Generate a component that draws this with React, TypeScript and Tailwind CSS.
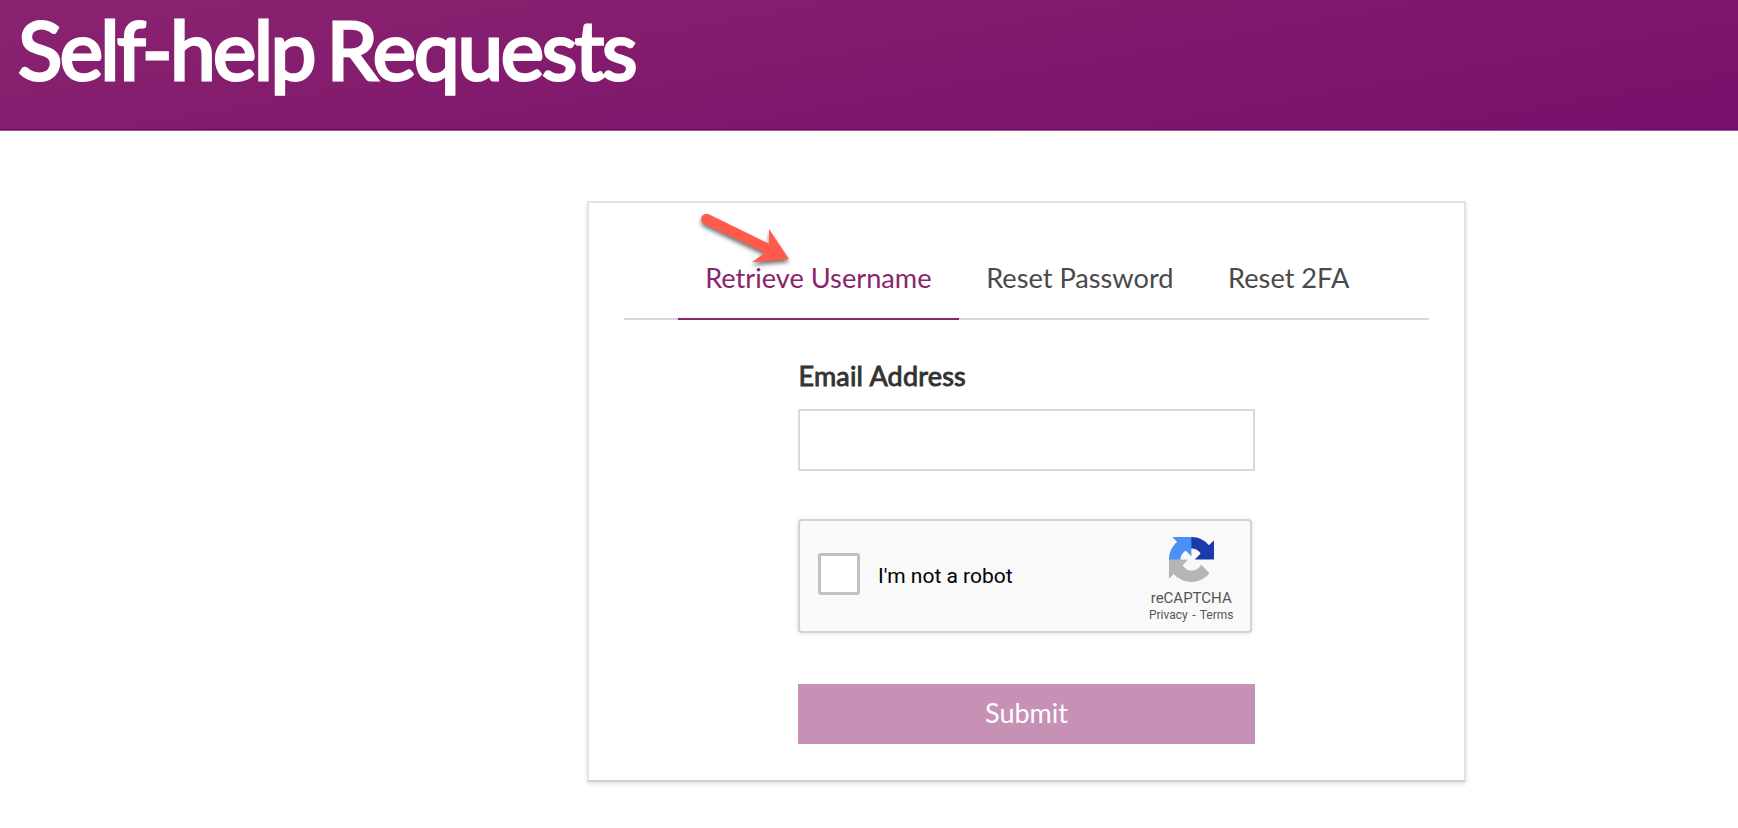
const tabs = ["Retrieve Username", "Reset Password", "Reset 2FA"];

function RecaptchaLogo() {
  return (
    <svg viewBox="0 0 64 64" className="h-[45px] w-[45px]">
      <path fill="#1c3aa9" d="M64 31.955l-.033-1.37V4.687l-7.16 7.16C50.948 4.674 42.033.093 32.05.093c-10.4 0-19.622 4.96-25.458 12.64l11.736 11.86a15.55 15.55 0 0 1 4.754-5.334c2.05-1.6 4.952-2.906 8.968-2.906.485 0 .86.057 1.135.163 4.976.393 9.288 3.14 11.828 7.124l-8.307 8.307L64 31.953" />
      <path fill="#4a90f5" d="M31.862.094l-1.37.033H4.594l7.16 7.16C4.58 13.147 0 22.06 0 32.046c0 10.4 4.96 19.622 12.64 25.458L24.5 45.768a15.55 15.55 0 0 1-5.334-4.754c-1.6-2.05-2.906-4.952-2.906-8.968 0-.485.057-.86.163-1.135.393-4.976 3.14-9.288 7.124-11.828l8.307 8.307L31.86.095" />
      <path fill="#b5b5b5" d="M.001 32.045l.033 1.37v25.898l7.16-7.16c5.86 7.173 14.774 11.754 24.76 11.754 10.4 0 19.622-4.96 25.458-12.64l-11.736-11.86a15.55 15.55 0 0 1-4.754 5.334c-2.05 1.6-4.952 2.906-8.968 2.906-.485 0-.86-.057-1.135-.163-4.976-.393-9.288-3.14-11.828-7.124l8.307-8.307c-10.522.04-22.4.066-27.295-.005" />
    </svg>
  );
}

function Arrow() {
  return (
    <svg viewBox="696 206 104 68" className="pointer-events-none absolute top-[3px] left-[107px] h-[68px] w-[104px] drop-shadow-[0px_3px_2px_rgba(0,0,0,0.55)]">
      <path fill="#ff5a4b" d="M708.7 214.3 L769 243.7 V229 L789 259.3 L752 262.2 L765 252.8 L704.2 224 A5.2 5.2 0 0 1 708.7 214.3 Z" />
    </svg>
  );
}

export default function App() {
  return (
    <div className="h-[828px] overflow-hidden bg-white font-['Lato',sans-serif]">
      <header className="flex h-[131px] border-b border-[#a55a9d] bg-[linear-gradient(170deg,#8a236f_0%,#77106b_100%)] pl-[18px] shadow-[inset_0_-1px_0_#6f0763]">
        <h1 className="text-[82px] leading-[96px] tracking-[-2.35px] whitespace-nowrap text-white [-webkit-text-stroke:3px_white] [word-spacing:-6px]">
          <span className="tracking-[-2.6px]">Self-help</span> Requests
        </h1>
      </header>

      <main className="relative mt-[70px] ml-[587px] h-[581px] w-[879px] border-2 border-[#e4e4e4] border-b-[#cfcfcf] px-[35px] shadow-[0_2px_4px_rgba(0,0,0,0.12)]">
        <Arrow />
        <nav className="flex h-[117px] items-end justify-center border-b-2 border-[#d8d8d8] pl-[1.5px]">
          {tabs.map((tab, i) => (
            <button
              key={tab}
              className={
                i === 0
                  ? "-mb-[2px] h-[84px] border-b-2 border-[#8b246d] px-[27.3px] pt-[2px] text-[27.2px] whitespace-nowrap text-[#8b246d]"
                  : "-mb-[2px] h-[84px] border-b-2 border-transparent px-[27.3px] pt-[2px] text-[27.2px] whitespace-nowrap text-[#4a4a4a]"
              }
            >
              {tab}
            </button>
          ))}
        </nav>

        <form className="mx-auto flex w-[457px] flex-col">
          <label htmlFor="email" className="mt-[38px] h-[51px] pl-[0.5px] text-[27px] leading-[36px] tracking-[0.2px] text-[#333] [-webkit-text-stroke:0.9px_#333]">Email Address</label>
          <input id="email" className="h-[62px] w-full border-2 border-[#dadada] bg-white px-3 outline-none" />

          <div className="mt-[48px] flex h-[114px] w-[454px] rounded-[4px] border-2 border-[#d3d3d3] bg-[#f9f9f9] pr-[16.5px] pl-[18px] font-['Roboto',sans-serif] shadow-[0_1px_4px_1px_rgba(0,0,0,0.08)]">
            <div className="mt-[32px] h-[42px] w-[42px] rounded-[3px] border-[3px] border-[#c1c1c1] bg-white" />
            <span className="mt-[42px] ml-[18px] text-[21px] leading-[26px] text-black">I'm not a robot</span>
            <div className="mt-[16px] ml-auto flex flex-col items-center text-[#555]">
              <RecaptchaLogo />
              <span className="mt-[7px] text-[15px] leading-[18px]">reCAPTCHA</span>
              <span className="text-[12px] leading-[17px] [word-spacing:1.5px]">Privacy - Terms</span>
            </div>
          </div>

          <button type="button" className="mt-[51px] h-[60px] w-full bg-[#c791b6] pb-[2px] text-[27px] text-white">Submit</button>
        </form>
      </main>
    </div>
  );
}
